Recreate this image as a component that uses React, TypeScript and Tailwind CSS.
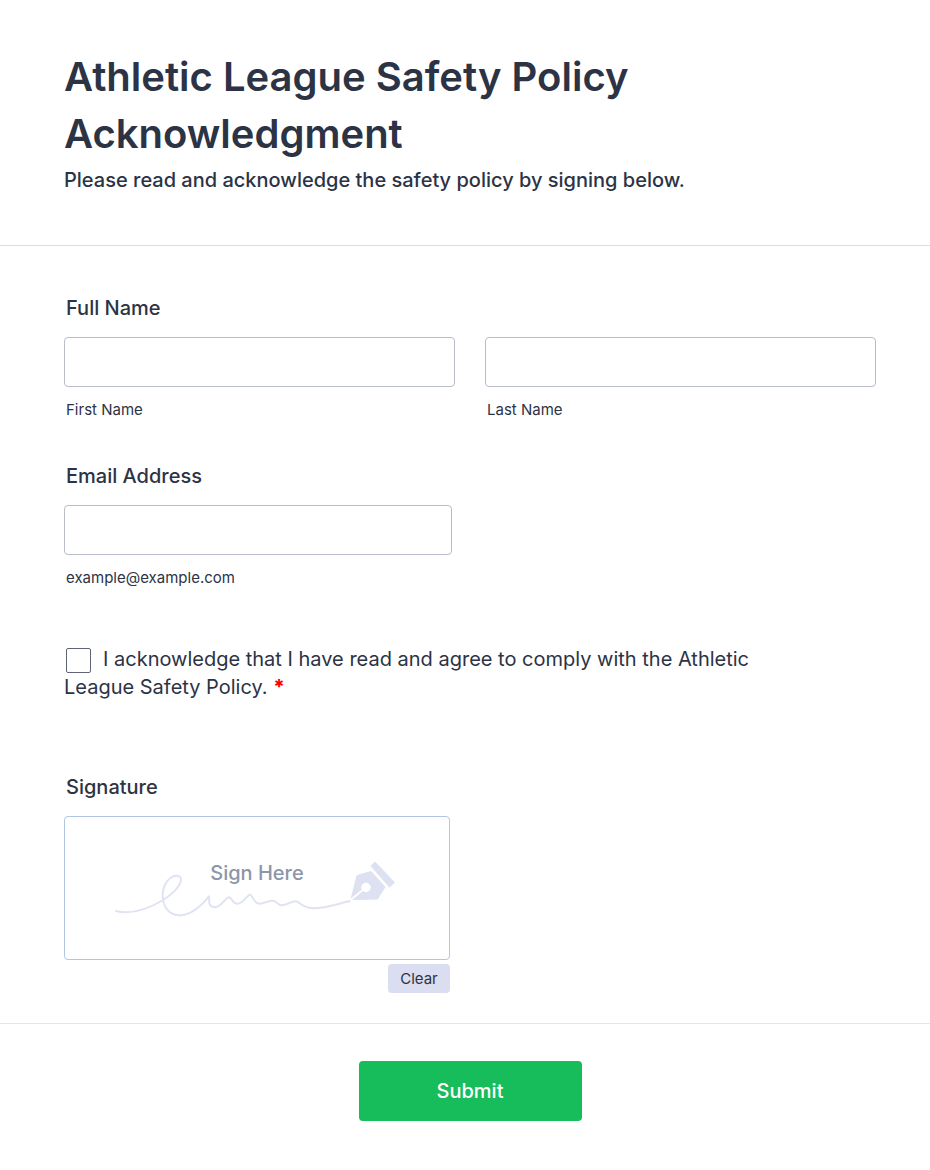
import { type FormEvent, type ReactNode } from "react";

const INPUT_CLASS =
  "block h-[50px] w-full rounded-sm border border-[#b8bdc9] bg-white px-3 text-base outline-none focus:border-[#2e69ff]";

function FieldLabel({ htmlFor, children }: { htmlFor: string; children: ReactNode }) {
  return (
    <label htmlFor={htmlFor} className="block px-[2px] text-[20px] leading-6 font-medium">
      {children}
    </label>
  );
}

function TextField({ id, type = "text", hint }: { id: string; type?: string; hint: string }) {
  return (
    <div>
      <input id={id} name={id} type={type} className={INPUT_CLASS} />
      <label htmlFor={id} className="mt-[13px] block px-[2px] text-[15px] leading-5">
        {hint}
      </label>
    </div>
  );
}

function SignatureArt() {
  return (
    <svg viewBox="0 0 284 60" className="h-[60px] w-[284px]" fill="none" aria-hidden="true">
      <path
        d="M1 50C17 54 33 48 47.3 39.5C56 34 64 27 66 20C67 15 62 13.5 57 16C48 21 46 34 49 43C52 51 59 55 66 54.3C78 53 87 44 94 35.3C95 38 92 45 99 46.3C106 47 110 36.5 114 36.3C117 36.3 117 42.7 122.3 42.7C128 42.7 132 34 135 33.7C138 34 138 42.3 144.5 42.7C150 42.7 154 39 158.3 39.7C162 40.3 162 44.3 167 44.3C172 44.3 176 40 181 40.3C185 40.6 187 47.3 199 47.3C210 47.3 222 43 235 40"
        stroke="#dfe3f2"
        strokeWidth="2"
        strokeLinecap="round"
        strokeLinejoin="round"
      />
      <path
        d="M236 38.5L242 14.5L256 10.5L270 26L262.5 38Z"
        fill="#dde1f1"
        stroke="#dde1f1"
        strokeLinejoin="round"
      />
      <path d="M235 39.5L249 28" stroke="#fff" strokeWidth="1.7" />
      <circle cx="251" cy="26.5" r="4.7" fill="#fff" />
      <path
        d="M260 1L279.5 21.5L274.5 26L256 5Z"
        fill="#dde1f1"
        stroke="#dde1f1"
        strokeLinejoin="round"
      />
    </svg>
  );
}

export default function App() {
  const handleSubmit = (event: FormEvent) => event.preventDefault();

  return (
    <form
      onSubmit={handleSubmit}
      className="min-h-screen bg-white font-['Inter',sans-serif] text-[#2c3345]"
    >
      <header className="border-b border-[#d9dbe6] pt-12 pr-[54px] pb-[53px] pl-16">
        <h1 className="max-w-3xl text-[40px] leading-[57px] font-semibold">
          Athletic League Safety Policy Acknowledgment
        </h1>
        <p className="mt-[6px] text-[20px] leading-6 font-medium">
          Please read and acknowledge the safety policy by signing below.
        </p>
      </header>

      <main className="pt-[50px] pr-[54px] pb-[30px] pl-16">
        <FieldLabel htmlFor="first-name">Full Name</FieldLabel>
        <div className="mt-[17px] grid grid-cols-2 gap-[30px]">
          <TextField id="first-name" hint="First Name" />
          <TextField id="last-name" hint="Last Name" />
        </div>

        <div className="mt-11 max-w-[388px]">
          <FieldLabel htmlFor="email">Email Address</FieldLabel>
          <div className="mt-[17px]">
            <TextField id="email" type="email" hint="example@example.com" />
          </div>
        </div>

        <div className="mt-[57px] max-w-[700px] text-[20px] leading-7">
          <input
            id="acknowledge"
            type="checkbox"
            required
            className="mr-3 ml-[2px] inline-block size-[25px] appearance-none rounded-xs border border-[#5f6574] align-middle checked:bg-[#2e69ff]"
          />
          <label htmlFor="acknowledge">
            I acknowledge that I have read and agree to comply with the Athletic League Safety
            Policy. <span className="font-extrabold text-[#ff0000]">*</span>
          </label>
        </div>

        <section aria-labelledby="signature-label" className="mt-[74px] max-w-[386px]">
          <h2 id="signature-label" className="px-[2px] text-[20px] leading-6 font-medium">
            Signature
          </h2>
          <div className="relative mt-[17px] flex h-36 justify-center rounded-sm border border-[#b3c5e4] pt-11">
            <SignatureArt />
            <span className="absolute top-11 text-[20px] leading-6 font-medium text-[#8d95a8]">
              Sign Here
            </span>
          </div>
          <div className="mt-1 flex justify-end">
            <button
              type="button"
              className="h-[29px] w-[62px] rounded-sm bg-[#dadef0] text-[15px] leading-5"
            >
              Clear
            </button>
          </div>
        </section>
      </main>

      <footer className="flex justify-center border-t border-[#e3e5ee] pt-[37px] pr-[54px] pb-12 pl-16">
        <button
          type="submit"
          className="h-[60px] w-[223px] rounded-sm bg-[#18bd5b] text-[20px] leading-6 font-medium text-white"
        >
          Submit
        </button>
      </footer>
    </form>
  );
}
